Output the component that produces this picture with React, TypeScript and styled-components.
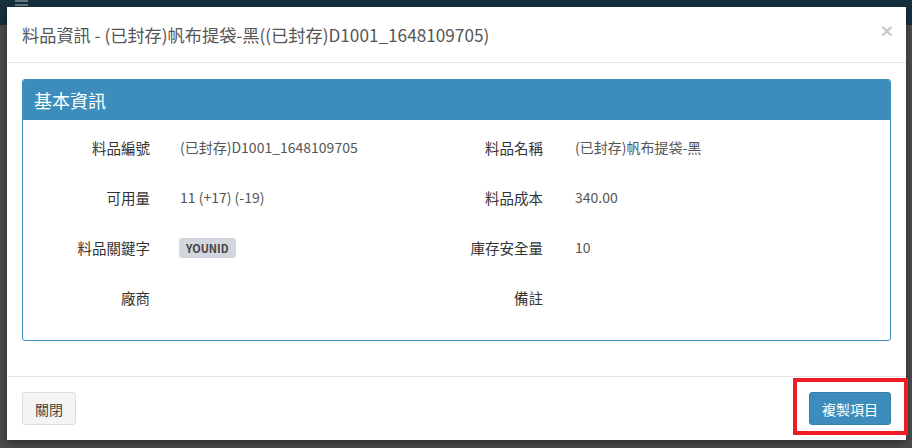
import React from "react";
import styled, { createGlobalStyle } from "styled-components";

const Global = createGlobalStyle`
  html, body { margin: 0; padding: 0; }
  body {
    background: #4b4b4b;
    font-family: "Noto Sans CJK TC", "Noto Sans", sans-serif;
    width: 912px;
    height: 448px;
    overflow: hidden;
  }
  * { box-sizing: border-box; }
`;

const Page = styled.div`
  position: relative;
  width: 912px;
  height: 448px;
  background: #4b4b4b;
`;

const Navbar = styled.div`
  height: 25px;
  background: #16303f;
  padding-left: 15px;
  display: flex;
  flex-direction: column;
  gap: 2px;
`;

const NavBar = styled.span`
  display: block;
  width: 13px;
  height: 2px;
  background: #6b7780;
`;

const Modal = styled.div`
  position: absolute;
  left: 7px;
  top: 7px;
  width: 899px;
  background: #fff;
  box-shadow: 0 3px 9px rgba(0, 0, 0, 0.4);
`;

const Header = styled.div`
  display: flex;
  align-items: center;
  justify-content: space-between;
  padding: 15px;
  border-bottom: 1px solid #e5e5e5;
`;

const Title = styled.h4`
  margin: 0;
  font-size: 17.2px;
  font-weight: 400;
  line-height: 25px;
  color: #555;
`;

const Close = styled.button`
  border: 0;
  background: none;
  padding: 0;
  font-family: "Liberation Sans", sans-serif;
  font-size: 21px;
  font-weight: 700;
  line-height: 1;
  color: #000;
  opacity: 0.2;
  margin-top: -8px;
  margin-right: -2px;
`;

const Body = styled.div`
  padding: 16px 15px 15px;
`;

const Panel = styled.div`
  border: 1px solid #3c8dbc;
  border-radius: 3px;
  margin-bottom: 20px;
`;

const PanelHeading = styled.div`
  background: #3c8dbc;
  color: #fff;
  padding: 10px 11px;
  font-size: 18px;
  line-height: 20px;
  border-radius: 2px 2px 0 0;
`;

const PanelBody = styled.div`
  display: grid;
  grid-template-columns: 127px 306px 87px 1fr;
  grid-auto-rows: 34px;
  row-gap: 16px;
  padding: 10px 0 26px;
  align-items: center;
`;

const Label = styled.div`
  text-align: right;
  font-size: 14.5px;
  color: #333;
  white-space: nowrap;
`;

const Value = styled.div<{ $pad: number }>`
  padding-left: ${(p) => p.$pad}px;
  font-size: 14px;
  color: #555;
  white-space: nowrap;
`;

const Badge = styled.span`
  display: inline-flex;
  align-items: center;
  height: 20px;
  padding: 0 7px;
  margin-left: -1px;
  background: #d2d6de;
  color: #444;
  font-size: 11px;
  font-weight: 700;
  border-radius: 3px;
`;

const Footer = styled.div`
  position: relative;
  display: flex;
  justify-content: space-between;
  padding: 15px;
  border-top: 1px solid #e5e5e5;
`;

const Button = styled.button<{ $primary?: boolean }>`
  height: 33px;
  padding: 0 12px;
  font-family: "Noto Sans CJK TC", sans-serif;
  font-size: 14px;
  border-radius: 3px;
  border: 1px solid ${(p) => (p.$primary ? "#367fa9" : "#ddd")};
  background: ${(p) => (p.$primary ? "#3c8dbc" : "#f4f4f4")};
  color: ${(p) => (p.$primary ? "#fff" : "#444")};
  min-width: ${(p) => (p.$primary ? "81px" : "54px")};
`;

const Highlight = styled.div`
  position: absolute;
  left: 786px;
  top: 1px;
  width: 115px;
  height: 57px;
  border: 4px solid #ee1c25;
  pointer-events: none;
`;

const rows: [string, React.ReactNode, string, React.ReactNode][] = [
  ["料品編號", "(已封存)D1001_1648109705", "料品名稱", "(已封存)帆布提袋-黑"],
  ["可用量", "11 (+17) (-19)", "料品成本", "340.00"],
  ["料品關鍵字", <Badge>YOUNID</Badge>, "庫存安全量", "10"],
  ["廠商", "", "備註", ""],
];

export default function App() {
  return (
    <Page>
      <Global />
      <Navbar>
        <NavBar />
        <NavBar />
      </Navbar>
      <Modal>
        <Header>
          <Title>料品資訊 - (已封存)帆布提袋-黑((已封存)D1001_1648109705)</Title>
          <Close>×</Close>
        </Header>
        <Body>
          <Panel>
            <PanelHeading>基本資訊</PanelHeading>
            <PanelBody>
              {rows.map(([l1, v1, l2, v2], i) => (
                <React.Fragment key={i}>
                  <Label>{l1}</Label>
                  <Value $pad={30}>{v1}</Value>
                  <Label>{l2}</Label>
                  <Value $pad={32}>{v2}</Value>
                </React.Fragment>
              ))}
            </PanelBody>
          </Panel>
        </Body>
        <Footer>
          <Button>關閉</Button>
          <Button $primary>複製項目</Button>
          <Highlight />
        </Footer>
      </Modal>
    </Page>
  );
}
